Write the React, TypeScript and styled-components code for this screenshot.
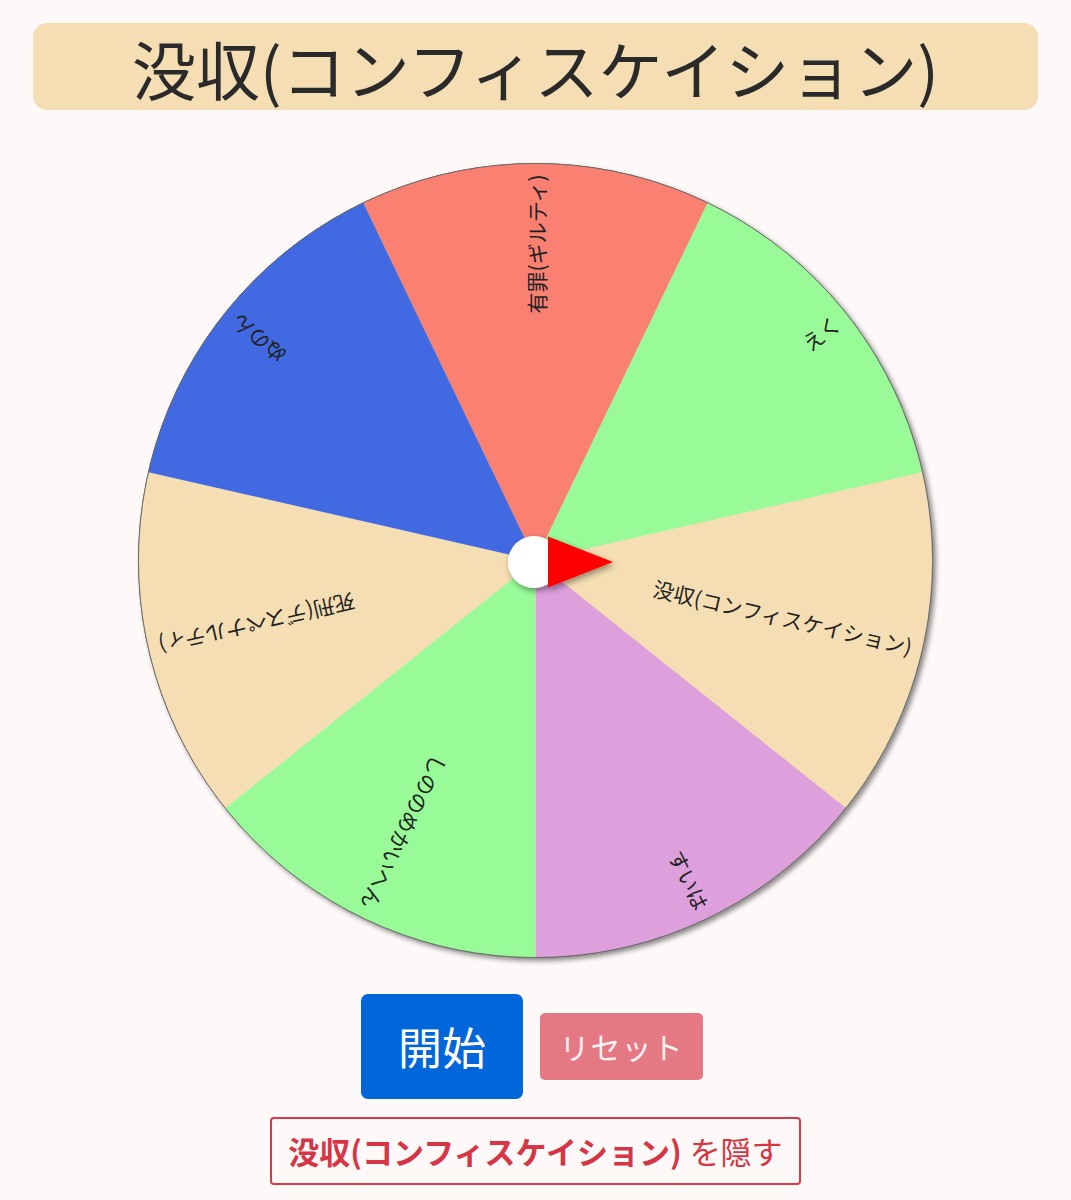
import React from "react";
import styled, { createGlobalStyle } from "styled-components";

const GlobalStyle = createGlobalStyle`
  html, body {
    margin: 0;
    padding: 0;
    background: #fdf9f8;
  }
  body {
    font-family: "Noto Sans CJK JP", "Noto Sans", sans-serif;
  }
`;

const Page = styled.div`
  display: flex;
  flex-direction: column;
  align-items: center;
  padding: 23px 33px 0;
`;

const TitleBar = styled.h1`
  box-sizing: border-box;
  width: 100%;
  height: 87px;
  margin: 0;
  background: #f5deb3;
  border-radius: 14px;
  display: flex;
  align-items: center;
  justify-content: center;
  font-size: 64px;
  font-weight: 400;
  color: #2a2a2a;
  line-height: 1;
`;

const WheelWrap = styled.div`
  margin-top: 53px;
  width: 795px;
  height: 795px;

  svg {
    display: block;
    overflow: visible;
  }
`;

const ButtonRow = styled.div`
  margin-top: 36px;
  display: flex;
  align-items: center;
  gap: 17px;
  padding-right: 7px;
`;

const BaseButton = styled.button`
  box-sizing: border-box;
  border: none;
  font-family: "Noto Sans CJK JP", sans-serif;
  color: #fff;
  display: flex;
  align-items: center;
  justify-content: center;
  cursor: pointer;
`;

const StartButton = styled(BaseButton)`
  width: 162px;
  height: 105px;
  border-radius: 7px;
  background: #0066d9;
  font-size: 44px;
  padding-bottom: 3px;
`;

const ResetButton = styled(BaseButton)`
  width: 163px;
  height: 67px;
  border-radius: 5px;
  background: #e57983;
  color: #fdf1f2;
  font-size: 30px;
  letter-spacing: 1px;
  padding-bottom: 3px;
`;

const HideButton = styled.button`
  box-sizing: border-box;
  margin-top: 18px;
  height: 68px;
  padding: 0 16px 2px;
  border: 2px solid #d9394a;
  border-radius: 4px;
  background: transparent;
  color: #d63545;
  font-family: "Noto Sans CJK JP", sans-serif;
  font-size: 31px;
  display: flex;
  align-items: center;
  gap: 8px;

  b {
    font-weight: 700;
  }
`;

type Segment = { label: string; color: string };

const segments: Segment[] = [
  { label: "有罪(ギルティ)", color: "#fa8072" },
  { label: "えく", color: "#98fb98" },
  { label: "没収(コンフィスケイション)", color: "#f5deb3" },
  { label: "すいは", color: "#dda0dd" },
  { label: "しののめかいへん", color: "#98fb98" },
  { label: "死刑(デスペナルティ)", color: "#f5deb3" },
  { label: "ぬのん", color: "#4169e1" },
];

const SIZE = 795;
const C = SIZE / 2;
const R = 397;

const point = (deg: number, r: number) => {
  const a = (deg * Math.PI) / 180;
  return [C + r * Math.sin(a), C - r * Math.cos(a)];
};

const Wheel = () => {
  const step = 360 / segments.length;
  return (
    <svg width={SIZE} height={SIZE} viewBox={`0 0 ${SIZE} ${SIZE}`}>
      <defs>
        <filter id="wheelShadow" x="-10%" y="-10%" width="120%" height="120%">
          <feDropShadow dx="3" dy="3" stdDeviation="2.5" floodColor="#000" floodOpacity="0.45" />
        </filter>
        <filter id="pinShadow" x="-50%" y="-50%" width="200%" height="200%">
          <feDropShadow dx="2" dy="3" stdDeviation="3" floodColor="#000" floodOpacity="0.4" />
        </filter>
      </defs>
      <circle cx={C} cy={C} r={R} fill="#f5deb3" stroke="#555" strokeWidth={1} filter="url(#wheelShadow)" />
      {segments.map((s, i) => {
        const mid = i * step;
        const [x0, y0] = point(mid - step / 2, R);
        const [x1, y1] = point(mid + step / 2, R);
        return (
          <path
            key={s.label}
            d={`M${C},${C} L${x0},${y0} A${R},${R} 0 0 1 ${x1},${y1} Z`}
            fill={s.color}
          />
        );
      })}
      <circle cx={C} cy={C} r={R} fill="none" stroke="#666" strokeWidth={0.8} />
      {segments.map((s, i) => (
        <text
          key={s.label}
          x={C + 386}
          y={C}
          transform={`rotate(${i * step - 90} ${C} ${C})`}
          textAnchor="end"
          dominantBaseline="central"
          fontFamily='"Noto Sans CJK JP", sans-serif'
          fontSize={21}
          fill="#222"
        >
          {s.label}
        </text>
      ))}
      <g filter="url(#pinShadow)">
        <circle cx={C - 1.5} cy={C + 1.5} r={26} fill="#fff" />
        <polygon
          points={`${C + 12.5},${C - 24} ${C + 77.5},${C + 1.5} ${C + 12.5},${C + 27}`}
          fill="#ff0000"
        />
      </g>
    </svg>
  );
};

const App = () => {
  return (
    <>
      <GlobalStyle />
      <Page>
        <TitleBar>没収(コンフィスケイション)</TitleBar>
        <WheelWrap>
          <Wheel />
        </WheelWrap>
        <ButtonRow>
          <StartButton>開始</StartButton>
          <ResetButton>リセット</ResetButton>
        </ButtonRow>
        <HideButton>
          <b>没収(コンフィスケイション)</b>
          <span>を隠す</span>
        </HideButton>
      </Page>
    </>
  );
};

export default App;
